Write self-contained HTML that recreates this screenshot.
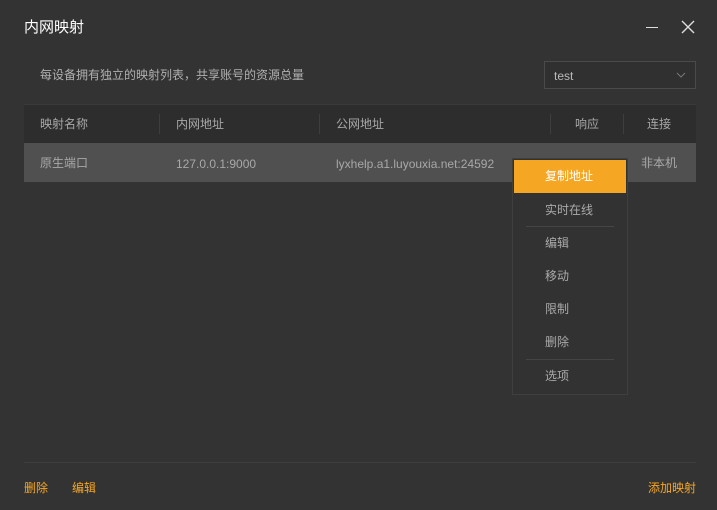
<!DOCTYPE html>
<html><head><meta charset="utf-8"><style>
*{margin:0;padding:0;box-sizing:border-box}
body{width:717px;height:510px;background:#333;font-family:"Liberation Sans","Noto Sans CJK SC",sans-serif;color:#a8a8a8;position:relative;overflow:hidden;font-size:12px}
.a{position:absolute;white-space:nowrap}
.title{left:24px;top:16px;font-size:15px;color:#fff}
.sel{left:544px;top:61px;width:152px;height:28px;border:1px solid #4a4a4a;background:#303030}
.hdr{left:24px;top:104px;width:672px;height:39px;background:#2d2d2d;border-top:1px solid #3a3a3a}
.row{left:24px;top:143px;width:672px;height:39px;background:#505050}
.vs{position:absolute;top:9px;width:1px;height:20px;background:#3e3e3e}
.menu{left:512px;top:158px;width:116px;height:237px;background:#323232;border:1px solid #3f3f3f}
.mi{position:absolute;left:32px;font-size:12px;color:#aaa}
.sep{position:absolute;left:13px;width:88px;height:1px;background:#454545}
.or{color:#f5a623}
</style></head><body>
<div class="a title">内网映射</div>
<div class="a" style="left:646px;top:27px;width:12px;height:1px;background:#ddd"></div>
<svg class="a" style="left:681px;top:20px" width="14" height="14"><path d="M1 1L13 13M13 1L1 13" stroke="#ddd" stroke-width="1.4"/></svg>
<div class="a" style="left:40px;top:66px;color:#b0b0b0">每设备拥有独立的映射列表，共享账号的资源总量</div>
<div class="a sel"><span class="a" style="left:9px;top:7px;color:#bbb">test</span>
<svg class="a" style="left:131px;top:10px" width="10" height="7"><path d="M1 1L5 5L9 1" stroke="#777" fill="none"/></svg></div>
<div class="a hdr">
<span class="a" style="left:16px;top:10px">映射名称</span>
<div class="vs" style="left:135px"></div>
<span class="a" style="left:152px;top:10px">内网地址</span>
<div class="vs" style="left:295px"></div>
<span class="a" style="left:312px;top:10px">公网地址</span>
<div class="vs" style="left:526px"></div>
<span class="a" style="left:551px;top:10px">响应</span>
<div class="vs" style="left:599px"></div>
<span class="a" style="left:623px;top:10px">连接</span>
</div>
<div class="a row">
<span class="a" style="left:16px;top:11px">原生端口</span>
<span class="a" style="left:152px;top:14px">127.0.0.1:9000</span>
<span class="a" style="left:312px;top:14px">lyxhelp.a1.luyouxia.net:24592</span>
<span class="a" style="left:617px;top:11px">非本机</span>
</div>
<div class="a menu">
<div style="position:absolute;left:1px;top:1px;width:112px;height:33px;background:#f5a623"></div>
<span class="mi" style="top:8px;color:#fff">复制地址</span>
<span class="mi" style="top:42px">实时在线</span>
<div class="sep" style="top:67px"></div>
<span class="mi" style="top:75px">编辑</span>
<span class="mi" style="top:108px">移动</span>
<span class="mi" style="top:141px">限制</span>
<span class="mi" style="top:174px">删除</span>
<div class="sep" style="top:200px"></div>
<span class="mi" style="top:208px">选项</span>
</div>
<div class="a" style="left:24px;top:462px;width:672px;height:1px;background:#3d3d3d"></div>
<span class="a or" style="left:24px;top:479px">删除</span>
<span class="a or" style="left:72px;top:479px">编辑</span>
<span class="a or" style="left:648px;top:479px">添加映射</span>
</body></html>
